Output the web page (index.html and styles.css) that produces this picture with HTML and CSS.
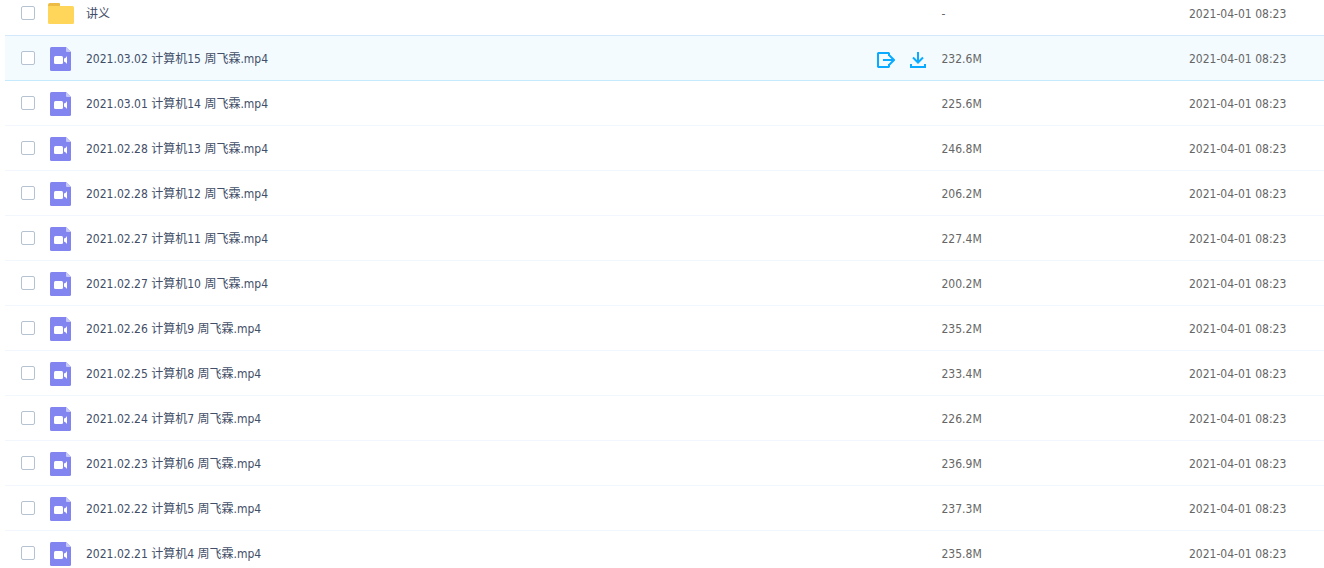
FILE: index.html
```
<!DOCTYPE html>
<html lang="zh-CN">
<head>
  <meta charset="UTF-8" />
  <title>文件列表</title>
  <link rel="stylesheet" href="styles.css">
</head>
<body>

  <svg class="sprite" aria-hidden="true">
    <symbol id="icon-folder" viewBox="0 0 26 22">
      <path d="M0 2a2 2 0 0 1 2-2h9a1 1 0 0 1 1 1v5H0z" fill="#edbc45"/>
      <path d="M0 3h24.500a1.500 1.500 0 0 1 1.500 1.500V19.500a1.500 1.500 0 0 1-1.500 1.500H1.500a1.500 1.500 0 0 1-1.500-1.500z" fill="#ffd659"/>
    </symbol>
    <symbol id="icon-video" viewBox="0 0 26 24">
      <path d="M3.500 0H18l5 5v17.500a1.500 1.500 0 0 1-1.500 1.500h-18A1.500 1.500 0 0 1 2 22.500v-21A1.500 1.500 0 0 1 3.500 0z" fill="#8285f0"/>
      <path d="M18 0l5 5h-4a1 1 0 0 1-1-1z" fill="#c7c8fa"/>
      <rect x="6" y="9" width="9" height="8" rx="1.500" fill="#fff"/>
      <path d="M19 9v8q-1-2-3-2.500v-3q2-.5 3-2.500z" fill="#fff"/>
    </symbol>
  </svg>

  <table class="file-list">
    <tbody id="files"></tbody>
  </table>

  <template id="actions">
    <span class="actions">
      <button type="button" aria-label="分享">
        <svg width="18" height="16" viewBox="0 0 18 16" fill="none" stroke="#09aaff" stroke-width="2">
          <path d="M12 4V1.500L11.500 1H1.500L1 1.500v13l.5.5h10l.5-.5V12M6 8h11M12.500 3.500L17 8l-4.500 4.500"/>
        </svg>
      </button>
      <button type="button" aria-label="下载">
        <svg width="16" height="16" viewBox="0 0 16 16" fill="none" stroke="#09aaff" stroke-width="2">
          <path d="M8 0v10M3 5.500l5 5 5-5M1 12v3h14v-3"/>
        </svg>
      </button>
    </span>
  </template>

  <script>
    const files = [
      ['讲义', '-'],
      ['2021.03.02 计算机15 周飞霖.mp4', '232.6M'],
      ['2021.03.01 计算机14 周飞霖.mp4', '225.6M'],
      ['2021.02.28 计算机13 周飞霖.mp4', '246.8M'],
      ['2021.02.28 计算机12 周飞霖.mp4', '206.2M'],
      ['2021.02.27 计算机11 周飞霖.mp4', '227.4M'],
      ['2021.02.27 计算机10 周飞霖.mp4', '200.2M'],
      ['2021.02.26 计算机9 周飞霖.mp4', '235.2M'],
      ['2021.02.25 计算机8 周飞霖.mp4', '233.4M'],
      ['2021.02.24 计算机7 周飞霖.mp4', '226.2M'],
      ['2021.02.23 计算机6 周飞霖.mp4', '236.9M'],
      ['2021.02.22 计算机5 周飞霖.mp4', '237.3M'],
      ['2021.02.21 计算机4 周飞霖.mp4', '235.8M']
    ];
    const activeRow = 1;

    document.getElementById('files').innerHTML = files.map(([name, size], i) => {
      const type = size === '-' ? 'folder' : 'video';
      return `<tr class="${i === activeRow ? 'active' : ''}">
        <td class="name">
          <div class="name-cell">
            <input type="checkbox" id="file-${i}">
            <svg class="icon ${type}"><use href="#icon-${type}"/></svg>
            <label for="file-${i}">${name}</label>
            ${i === activeRow ? document.getElementById('actions').innerHTML : ''}
          </div>
        </td>
        <td class="size">${size}</td>
        <td class="date">2021-04-01 08:23</td>
      </tr>`;
    }).join('');
  </script>

</body>
</html>
```
FILE: styles.css
```
body {
  margin: 0;
  height: 100vh;
  overflow: hidden;
  display: flow-root;
  background: #fff;
  color: #666;
  font: 12px/18px "DejaVu Sans Condensed", "Noto Sans", "Noto Sans CJK SC", sans-serif;
}
.sprite {
  display: none;
}
/* list is scrolled a little, so the first row starts above the window */
.file-list {
  width: calc(100% - 5px);
  margin: -9px 0 0 5px;
  border-spacing: 0;
  table-layout: fixed;
}
td {
  box-sizing: border-box;
  height: 45px;
  padding: 2px 0 0;
  border-bottom: 1px solid #f2f6fd;
  vertical-align: middle;
}
.name {
  width: 71%;
  padding: 0;
}
.date {
  width: 135px;
}
.active td {
  background: #f3fbff;
  border-color: #c5e9fd;
}
tr:has(+ .active) td {
  border-color: #d3e8fb;
}
.name-cell {
  display: flex;
  align-items: center;
  padding: 0 15px 0 16px;
}
.name-cell input {
  appearance: none;
  box-sizing: border-box;
  width: 14px;
  height: 14px;
  margin: 0 13px 0 0;
  border: 1px solid #b5c2d2;
  border-radius: 2px;
  background: #fff;
}
.name-cell input:checked {
  background: #09aaff;
}
.icon {
  width: 26px;
  height: 22px;
  margin: 2px 12px 0 0;
}
.icon.video {
  height: 24px;
}
.name-cell label {
  margin-top: 2px;
  color: #424e67;
}
.actions {
  display: flex;
  gap: 15px;
  margin: 3px 0 0 auto;
}
.actions button {
  display: flex;
  padding: 0;
  border: 0;
  background: none;
  cursor: pointer;
}
```
